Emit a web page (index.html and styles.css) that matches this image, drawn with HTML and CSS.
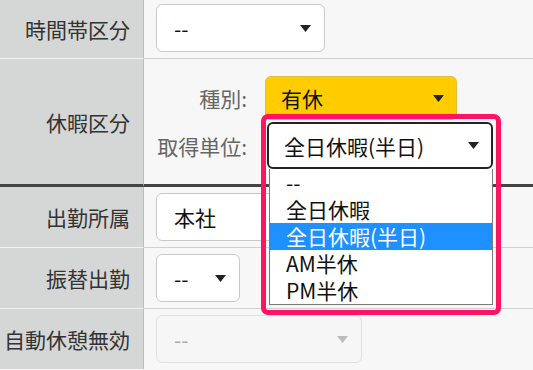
FILE: index.html
```html
<!DOCTYPE html>
<html lang="ja">
<head>
<meta charset="utf-8">
<title>勤怠入力</title>
<link rel="stylesheet" href="styles.css">
</head>
<body>
<div class="form">
  <div class="row">
    <div class="label">時間帯区分</div>
    <div class="field field-first">
      <div class="select w-169"><span>--</span><svg class="caret" viewBox="0 0 11 7"><polygon points="0,0 11,0 5.5,7"/></svg></div>
    </div>
  </div>
  <div class="row row-heavy">
    <div class="label">休暇区分</div>
    <div class="field field-leave">
      <div class="subgrid">
        <div class="sublabel">種別:</div>
        <div class="select select-yellow"><span>有休</span><svg class="caret" viewBox="0 0 11 7"><polygon points="0,0 11,0 5.5,7"/></svg></div>
        <div class="sublabel">取得単位:</div>
        <div class="focus-wrap">
          <div class="select select-focus"><span>全日休暇(半日)</span><svg class="caret" viewBox="0 0 11 7"><polygon points="0,0 11,0 5.5,7"/></svg></div>
          <ul class="listbox">
            <li>--</li>
            <li>全日休暇</li>
            <li class="active">全日休暇(半日)</li>
            <li>AM半休</li>
            <li>PM半休</li>
          </ul>
          <div class="highlight"></div>
        </div>
      </div>
    </div>
  </div>
  <div class="row">
    <div class="label">出勤所属</div>
    <div class="field">
      <div class="select w-206"><span>本社</span><svg class="caret" viewBox="0 0 11 7"><polygon points="0,0 11,0 5.5,7"/></svg></div>
    </div>
  </div>
  <div class="row">
    <div class="label">振替出勤</div>
    <div class="field">
      <div class="select w-84"><span>--</span><svg class="caret" viewBox="0 0 11 7"><polygon points="0,0 11,0 5.5,7"/></svg></div>
    </div>
  </div>
  <div class="row row-last">
    <div class="label">自動休憩無効</div>
    <div class="field">
      <div class="select select-disabled w-206"><span>--</span><svg class="caret" viewBox="0 0 11 7"><polygon points="0,0 11,0 5.5,7"/></svg></div>
    </div>
  </div>
</div>
</body>
</html>
```
FILE: styles.css
```css
* { box-sizing: border-box; }
html, body {
  margin: 0;
  padding: 0;
  background: #f7f7f7;
}
body {
  font-family: "Noto Sans CJK JP", "Noto Sans", sans-serif;
  font-size: 21px;
  color: #222;
  overflow: hidden;
}
.form {
  display: flex;
  flex-direction: column;
}
.row {
  display: flex;
}
.label {
  width: 144px;
  flex: none;
  background: #d5d6d6;
  border-right: 1px solid #bcbcbc;
  border-bottom: 1px solid #f2f2f2;
  display: flex;
  align-items: center;
  justify-content: flex-end;
  padding-right: 13px;
  color: #333;
  white-space: nowrap;
}
.field {
  flex: 1;
  border-bottom: 1px solid #d0d0d0;
  padding: 6px 0 6px 12px;
}
.field-first {
  padding-top: 4px;
}
.row-heavy .label,
.row-heavy .field {
  border-bottom: 3px solid #444;
}
.row-last .label,
.row-last .field {
  border-bottom: none;
}
.field-leave {
  padding: 17px 0 15px 12px;
}
.subgrid {
  display: grid;
  grid-template-columns: 91px auto;
  column-gap: 18px;
  row-gap: 2px;
  align-items: center;
  justify-content: start;
}
.sublabel {
  text-align: right;
  color: #666;
  white-space: nowrap;
}
.select {
  height: 48px;
  background: #fff;
  border: 1px solid #c9c9c9;
  border-radius: 6px;
  display: flex;
  align-items: center;
  justify-content: space-between;
  padding: 0 13px 0 17px;
  color: #111;
  white-space: nowrap;
}
.caret {
  width: 11px;
  height: 7px;
  fill: #222;
  flex: none;
}
.w-169 { width: 169px; }
.w-206 { width: 206px; }
.w-84 { width: 84px; }
.select-yellow {
  width: 192px;
  height: 44px;
  background: #ffcc00;
  border-color: #e0c040;
  padding-left: 15px;
  padding-right: 12px;
}
.focus-wrap {
  position: relative;
  margin-left: 2px;
  width: 226px;
}
.select-focus {
  width: 226px;
  height: 47px;
  border: 2px solid #222;
  border-radius: 6px;
  padding-left: 15px;
  padding-right: 12px;
}
.listbox {
  position: absolute;
  top: 47px;
  left: 2px;
  right: 0;
  margin: 0;
  padding: 0;
  list-style: none;
  background: #fff;
  border: 1px solid #7a7a7a;
  border-top: none;
  z-index: 2;
}
.listbox li {
  height: 27px;
  line-height: 27px;
  padding-left: 16px;
  color: #111;
  white-space: nowrap;
}
.listbox li.active {
  background: #1e90ff;
  color: #fff;
}
.highlight {
  position: absolute;
  left: -6px;
  top: -8px;
  width: 240px;
  height: 201px;
  border: 5px solid #ff1464;
  border-radius: 7px;
  z-index: 3;
  pointer-events: none;
}
.select-disabled {
  background: #f6f6f6;
  border-color: #e0e0e0;
  color: #aaa;
}
.select-disabled .caret {
  fill: #bbb;
}
```
